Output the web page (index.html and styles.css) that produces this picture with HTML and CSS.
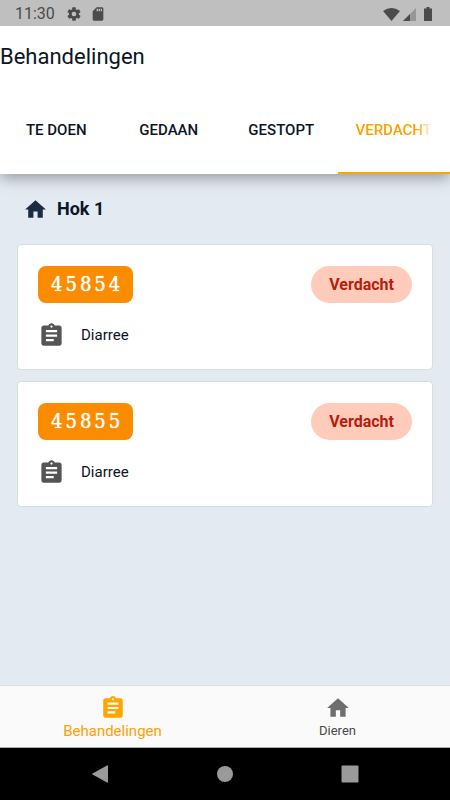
FILE: index.html
```html
<!DOCTYPE html>
<html lang="nl">
<head>
<meta charset="utf-8">
<meta name="viewport" content="width=device-width, initial-scale=1">
<title>Behandelingen</title>
<link rel="stylesheet" href="styles.css">
</head>
<body>
<svg class="defs" aria-hidden="true">
  <symbol id="home" viewBox="0 0 24 24"><path d="M10 20v-6h4v6h5v-8h3L12 3 2 12h3v8z"/></symbol>
  <symbol id="clipboard" viewBox="0 0 24 24"><path d="M19 3h-4.180C14.400 1.840 13.300 1 12 1s-2.400.84-2.820 2H5c-1.100 0-2 .9-2 2v14c0 1.100.9 2 2 2h14c1.100 0 2-.9 2-2V5c0-1.100-.9-2-2-2zm-7 0c.55 0 1 .45 1 1s-.45 1-1 1-1-.45-1-1 .45-1 1-1zm2 14H7v-2h7v2zm3-4H7v-2h10v2zm0-4H7V7h10v2z"/></symbol>
</svg>
<div class="app">
  <div class="status">
    <span class="clock">11:30</span>
    <svg class="gear" viewBox="0 0 24 24"><path d="M19.430 12.980c.04-.32.07-.64.07-.98s-.03-.66-.07-.98l2.110-1.650c.19-.15.24-.42.12-.64l-2-3.460c-.12-.22-.39-.3-.61-.22l-2.490 1c-.52-.4-1.080-.73-1.690-.98l-.38-2.650A.49.49 0 0 0 14 2h-4c-.25 0-.46.18-.49.42l-.38 2.650c-.61.25-1.170.59-1.690.98l-2.490-1c-.23-.09-.49 0-.61.22l-2 3.460c-.13.22-.07.49.12.64l2.110 1.650c-.04.32-.07.65-.07.98s.03.66.07.98l-2.110 1.650c-.19.15-.24.42-.12.64l2 3.460c.12.22.39.3.61.22l2.490-1c.52.4 1.080.73 1.690.98l.38 2.650c.03.24.24.42.49.42h4c.25 0 .46-.18.49-.42l.38-2.650c.61-.25 1.170-.59 1.690-.98l2.490 1c.23.09.49 0 .61-.22l2-3.460c.12-.22.07-.49-.12-.64l-2.110-1.650zM12 15.500a3.500 3.500 0 1 1 0-7 3.500 3.500 0 0 1 0 7z"/></svg>
    <svg class="card-icon" viewBox="0 0 24 24"><path d="M18 2h-8L4.020 8 4 20c0 1.100.9 2 2 2h12c1.100 0 2-.9 2-2V4c0-1.100-.9-2-2-2zm-6 6h-2V4h2v4zm3 0h-2V4h2v4zm3 0h-2V4h2v4z"/></svg>
    <svg class="signals" viewBox="0 0 52 16"><path d="M2 5Q10.500-1 19 5L10.500 15z"/><path opacity=".35" d="M22 15L35 2v13z"/><path d="M22 15l7-7v7z"/><path d="M43 2.500h2.500V1h3v1.500H51V15h-8z"/></svg>
  </div>
  <header class="header">
    <h1 class="title">Behandelingen</h1>
    <nav class="tabs">
      <button class="tab">TE DOEN</button>
      <button class="tab">GEDAAN</button>
      <button class="tab">GESTOPT</button>
      <button class="tab active"><span class="fade">VERDACHT</span></button>
    </nav>
  </header>
  <main class="content">
    <h2 class="group"><svg class="group-icon"><use href="#home"/></svg>Hok 1</h2>
    <article class="card">
      <div class="row"><span class="number">45854</span><span class="pill">Verdacht</span></div>
      <div class="reason"><svg class="reason-icon"><use href="#clipboard"/></svg>Diarree</div>
    </article>
    <article class="card">
      <div class="row"><span class="number">45855</span><span class="pill">Verdacht</span></div>
      <div class="reason"><svg class="reason-icon"><use href="#clipboard"/></svg>Diarree</div>
    </article>
  </main>
  <nav class="bottom">
    <a class="dest current" href="#behandelingen"><svg class="dest-icon"><use href="#clipboard"/></svg>Behandelingen</a>
    <a class="dest" href="#dieren"><svg class="dest-icon"><use href="#home"/></svg>Dieren</a>
  </nav>
  <div class="system">
    <button class="key" aria-label="Terug"><svg class="key-icon" viewBox="0 0 18 18"><path d="M16 .5Q17 0 17 1v16q0 1-1 .5L1.500 9.500q-.8-.5 0-1z"/></svg></button>
    <button class="key" aria-label="Startscherm"><svg class="key-icon" viewBox="0 0 18 18"><circle cx="9" cy="9" r="8"/></svg></button>
    <button class="key" aria-label="Overzicht"><svg class="key-icon" viewBox="0 0 18 18"><rect x=".5" y=".5" width="17" height="17" rx="1"/></svg></button>
  </div>
</div>
</body>
</html>
```
FILE: styles.css
```css
* { box-sizing: border-box; }
body {
  margin: 0;
  font-family: Roboto, "Liberation Sans", sans-serif;
  color: #0b1526;
  background: #e3eaf2;
}
button {
  border: 0;
  padding: 0;
  background: none;
  font: inherit;
  color: inherit;
}
svg { display: block; flex: none; fill: currentColor; }
.defs { position: absolute; width: 0; height: 0; }
.app { min-height: 100vh; display: flex; flex-direction: column; }

.status {
  position: relative;
  z-index: 1;
  display: flex;
  align-items: center;
  height: 26px;
  padding: 1px 17px 0 15px;
  background: #bfbfbf;
  color: #4b4b4b;
}
.clock { font-size: 16px; line-height: 26px; margin-right: 11px; }
.gear { width: 16px; height: 16px; margin-right: 8px; }
.card-icon { width: 16px; height: 16px; }
.signals { width: 52px; height: 16px; margin-left: auto; }

.header {
  position: relative;
  background: #fff;
  box-shadow: 0 4px 14px rgba(0, 0, 0, .35);
}
.title { margin: 0; font-size: 22px; line-height: 62px; font-weight: 400; }
.tabs { display: grid; grid-template-columns: repeat(4, 1fr); }
.tab {
  height: 86px;
  font-size: 15px;
  font-weight: 500;
  border-bottom: 2px solid transparent;
  padding: 0 18px;
  white-space: nowrap;
}
.active { color: #ffa000; border-color: #ffa500; }
.fade {
  display: block;
  overflow: hidden;
  text-align: left;
  -webkit-mask-image: linear-gradient(to left, transparent, #000 16px);
  mask-image: linear-gradient(to left, transparent, #000 16px);
}

.content { flex: 1; padding: 22px 17px 12px; }
.group {
  display: flex;
  align-items: center;
  gap: 9px;
  margin: 0 0 22px;
  padding-left: 6px;
  font-size: 18px;
  line-height: 26px;
  font-weight: 700;
}
.group-icon { width: 25px; height: 25px; color: #1b2b40; }
.card {
  padding: 21px 20px 20px;
  margin-bottom: 11px;
  background: #fff;
  border: 1px solid #d3e0dc;
  border-radius: 4px;
}
.row { display: flex; justify-content: space-between; margin-bottom: 19px; }
.number {
  padding: 0 10px 0 13px;
  border-radius: 8px;
  background: #fb8c00;
  color: #fff;
  font-family: "DejaVu Serif Condensed", "DejaVu Serif", serif;
  font-size: 20px;
  line-height: 37px;
  letter-spacing: 3px;
  text-shadow: 0 0 1px #fff;
}
.pill {
  padding: 0 18px;
  border-radius: 19px;
  background: #ffccbc;
  color: #b71c0c;
  font-size: 16px;
  line-height: 37px;
  font-weight: 700;
}
.reason { display: flex; align-items: center; gap: 16px; font-size: 15px; line-height: 27px; }
.reason-icon { width: 27px; height: 27px; color: #555; }

.bottom {
  display: grid;
  grid-template-columns: 1fr 1fr;
  height: 63px;
  background: #fafafa;
  border-top: 1px solid #d9dee4;
  border-bottom: 1px solid #aaa;
}
.dest {
  display: flex;
  flex-direction: column;
  align-items: center;
  padding-top: 9px;
  font-size: 13px;
  line-height: 20px;
  color: #484848;
  text-decoration: none;
}
.current { font-size: 15px; color: #ffa000; }
.dest-icon { width: 26px; height: 26px; color: #6e6e6e; }
.current .dest-icon { color: #ffa500; }

.system {
  display: flex;
  justify-content: center;
  gap: 107px;
  height: 52px;
  background: #000;
  color: #9a9a9a;
}
.key-icon { width: 18px; height: 18px; }
```
